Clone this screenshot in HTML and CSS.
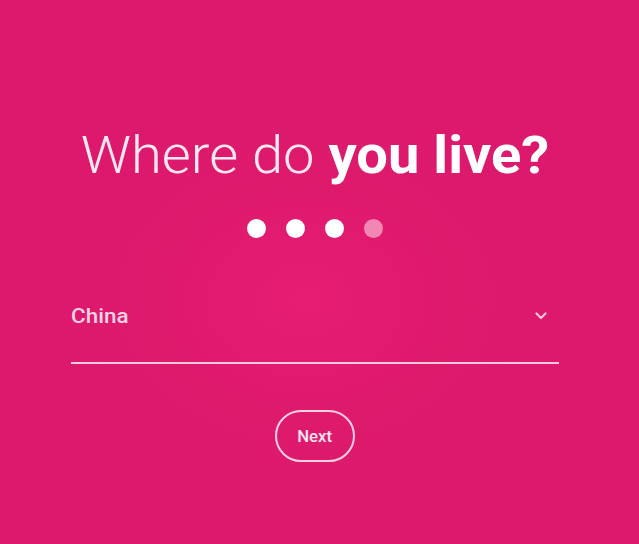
FILE: index.html
```html
<!DOCTYPE html>
<html lang="en">
<head>
<meta charset="utf-8">
<title>Where do you live?</title>
<link rel="stylesheet" href="styles.css">
</head>
<body>
<main class="stage">
  <h1 class="title"><span class="light">Where do</span> <span class="bold">you live?</span></h1>
  <div class="steps">
    <span class="dot"></span>
    <span class="dot"></span>
    <span class="dot"></span>
    <span class="dot dim"></span>
  </div>
  <div class="field">
    <span class="value">China</span>
    <svg class="chevron" width="12" height="8" viewBox="0 0 12 8"><path d="M1.5 1.5 L6 6 L10.5 1.5" fill="none" stroke="#f7c4dc" stroke-width="2.2" stroke-linecap="round" stroke-linejoin="round"/></svg>
  </div>
  <button class="next"><span class="next-label">Next</span></button>
</main>
</body>
</html>
```
FILE: styles.css
```css
html, body {
  margin: 0;
  padding: 0;
  height: 100%;
}
body {
  background: radial-gradient(ellipse 260px 200px at 305px 300px, #e61d72 0%, #de1a6d 60%, #dc196c 100%);
  background-color: #dc196c;
  font-family: Roboto, "Open Sans", sans-serif;
  color: #fbe6f0;
  overflow: hidden;
}
.stage {
  width: 629px;
  height: 544px;
  display: flex;
  flex-direction: column;
  align-items: center;
  box-sizing: border-box;
  padding-top: 126px;
}
.title {
  margin: 0;
  font-family: Roboto, sans-serif;
  font-size: 51px;
  line-height: 60px;
  color: #fde8f2;
  white-space: nowrap;
  transform: scaleX(1.1);
}
.light { font-weight: 300; }
.bold { font-weight: 700; color: #ffffff; }
.steps {
  display: flex;
  gap: 20px;
  margin-top: 33px;
}
.dot {
  width: 19px;
  height: 19px;
  border-radius: 50%;
  background: #ffffff;
}
.dot.dim {
  background: #f286b5;
}
.field {
  width: 488px;
  margin-top: 58px;
  display: flex;
  align-items: center;
  justify-content: space-between;
  box-sizing: border-box;
  padding: 0 12px 0 0;
  height: 68px;
  border-bottom: 2px solid #f7c9de;
}
.value {
  font-size: 21px;
  font-weight: 500;
  color: #f9d3e5;
  margin-top: -26px;
  transform: scaleX(1.07);
  transform-origin: left center;
}
.chevron {
  margin-top: -26px;
}
.next {
  margin-top: 46px;
  width: 80px;
  height: 52px;
  border: 2px solid #fbd0e3;
  border-radius: 26px;
  background: transparent;
  color: #fde4ef;
  font-family: Roboto, sans-serif;
  font-size: 16px;
  font-weight: 500;
  padding: 0;
}
.next-label {
  display: inline-block;
  transform: scaleX(1.05);
}
```
